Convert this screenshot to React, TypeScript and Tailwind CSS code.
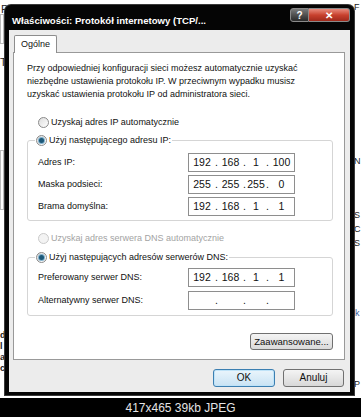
import { Fragment } from 'react';

function Radio({ checked, disabled }: { checked?: boolean; disabled?: boolean }) {
  return (
    <span
      className={`flex h-[11px] w-[11px] shrink-0 items-center justify-center rounded-full border ${
        disabled ? 'border-[#cacaca] bg-[#f3f3f3]' : 'border-[#8a8a8a] bg-gradient-to-br from-[#dcdcdc] to-white'
      }`}
    >
      {checked && <span className="h-[5px] w-[5px] rounded-full bg-[#1d5878] ring-1 ring-[#7fb0cc]" />}
    </span>
  );
}

function RadioLabel({ label, checked, disabled }: { label: string; checked?: boolean; disabled?: boolean }) {
  return (
    <div className={`flex h-[13px] items-center gap-[2px] ${disabled ? 'text-[#a3a3a3]' : 'text-[#111]'}`}>
      <Radio checked={checked} disabled={disabled} />
      <span className="leading-[13px]">{label}</span>
    </div>
  );
}

const fieldWidths = ['w-[26px]', 'w-[25px]', 'w-[20px]', 'w-[25px]'];

function IpBox({ parts }: { parts: string[] }) {
  return (
    <div className="flex h-[19px] w-[107px] items-center border border-[#8e8e8e] bg-white text-[10.5px]">
      {parts.map((p, i) => (
        <Fragment key={i}>
          {i > 0 && <span className="w-[3px] text-center">.</span>}
          <span className={`${fieldWidths[i]} text-center`}>{p}</span>
        </Fragment>
      ))}
    </div>
  );
}

function Row({ label, parts }: { label: string; parts: string[] }) {
  return (
    <div className="flex items-center">
      <span className="w-[150px]">{label}</span>
      <IpBox parts={parts} />
    </div>
  );
}

export default function App() {
  return (
    <div className="relative flex h-[417px] w-[361px] flex-col overflow-hidden bg-white font-['Liberation_Sans',Arial,sans-serif] text-[9px] text-[#111]">
      {/* page behind the dialog */}
      <span className="absolute left-[1px] top-[1px] text-[11px] text-[#222]">P</span>
      <span className="absolute left-[0px] top-[54px] text-[11px] text-[#222]">T</span>
      <span className="absolute left-[0px] top-[14px] h-[30px] w-[4px] border border-[#bbb]" />
      <span className="absolute left-[0px] top-[150px] h-[60px] w-[4px] border border-[#bbb]" />
      <span className="absolute left-[0px] top-[330px] text-[9px] font-bold leading-[11px] text-[#222]">d<br />l<br />a<br />c</span>
      <span className="absolute left-[354px] top-[1px] text-[9px] text-[#222]">F</span>
      <span className="absolute left-[354px] top-[155px] text-[9px] text-[#222]">N</span>
      <span className="absolute left-[354px] top-[209px] text-[9px] text-[#222]">S</span>
      <span className="absolute left-[354px] top-[223px] text-[9px] text-[#222]">C</span>
      <span className="absolute left-[354px] top-[237px] text-[9px] text-[#222]">S</span>
      <span className="absolute left-[355px] top-[307px] text-[9px] text-[#3a5a9a]">k</span>
      <span className="absolute left-[354px] top-[378px] text-[9px] text-[#222]">P</span>

      <div className="relative z-10 h-[398px] shrink-0 pl-[5px] pt-[5px]">
        {/* dialog */}
        <div className="flex h-[390px] w-[349px] flex-col rounded-t-[6px] bg-[#050505] px-[4px] pb-[3px] shadow-[0_0_0_1px_#3a3a3a]">
          {/* title bar */}
          <div className="flex h-[25px] shrink-0 items-start">
            <span className="flex-1 pl-[3px] pt-[10px] text-[9.6px] font-bold leading-[12px] text-white">
              Właściwości: Protokół internetowy (TCP/...
            </span>
            <div className="mt-[3px] flex h-[14px]">
              <div className="flex w-[19px] items-center justify-center rounded-l-[3px] border border-[#8a8a8a] bg-gradient-to-b from-[#7a7a7a] to-[#2a2a2a] text-[10px] font-bold text-white">
                ?
              </div>
              <div className="flex w-[41px] items-center justify-center rounded-r-[3px] border border-l-0 border-[#8a8a8a] bg-gradient-to-b from-[#e88a7c] via-[#c8412e] to-[#a0291b] text-[10px] font-bold text-white">
                ✕
              </div>
            </div>
          </div>

          {/* body */}
          <div className="flex flex-1 flex-col bg-[#ececec] px-[4px] pt-[5px]">
            <div className="relative z-10 -mb-px ml-[1px] flex h-[18px] w-[43px] items-center rounded-t-[2px] border border-b-0 border-[#8d8d8d] bg-white pl-[6px]">
              Ogólne
            </div>
            <div className="mr-[1px] flex h-[308px] flex-col border border-[#999] bg-white pl-[13px] pr-[11px]">
              <p className="mt-[9px] whitespace-nowrap leading-[13px]">
                Przy odpowiedniej konfiguracji sieci możesz automatycznie uzyskać
                <br />
                niezbędne ustawienia protokołu IP. W przeciwnym wypadku musisz
                <br />
                uzyskać ustawienia protokołu IP od administratora sieci.
              </p>

              <div className="ml-[11px] mt-[15px]">
                <RadioLabel label="Uzyskaj adres IP automatycznie" />
              </div>

              <fieldset className="mt-[5px] rounded-[3px] border border-[#d5d5d5] px-[10px] pb-[4px] pt-[6px]">
                <legend className="-ml-[3px] bg-white px-[1px]">
                  <RadioLabel label="Użyj następującego adresu IP:" checked />
                </legend>
                <div className="flex flex-col gap-[3px]">
                  <Row label="Adres IP:" parts={['192', '168', '1', '100']} />
                  <Row label="Maska podsieci:" parts={['255', '255', '255', '0']} />
                  <Row label="Brama domyślna:" parts={['192', '168', '1', '1']} />
                </div>
              </fieldset>

              <div className="ml-[11px] mt-[11px]">
                <RadioLabel label="Uzyskaj adres serwera DNS automatycznie" disabled />
              </div>

              <fieldset className="mt-[6px] rounded-[3px] border border-[#d5d5d5] px-[10px] pb-[5px] pt-[4px]">
                <legend className="-ml-[3px] bg-white px-[1px]">
                  <RadioLabel label="Użyj następujących adresów serwerów DNS:" checked />
                </legend>
                <div className="flex flex-col gap-[4px]">
                  <Row label="Preferowany serwer DNS:" parts={['192', '168', '1', '1']} />
                  <Row label="Alternatywny serwer DNS:" parts={['', '', '', '']} />
                </div>
              </fieldset>

              <div className="mt-[17px] flex justify-end">
                <button className="h-[17px] w-[83px] rounded-[3px] border border-[#707070] bg-gradient-to-b from-[#f4f4f4] to-[#dadada] text-[9.5px] leading-none">
                  Zaawansowane...
                </button>
              </div>
            </div>

            <div className="mt-[9px] flex justify-end gap-[8px] pr-[2px]">
              <button className="h-[18px] w-[62px] rounded-[3px] border border-[#3c7fb1] bg-gradient-to-b from-[#eaf5fc] to-[#c9e3f4] text-[10px] leading-none shadow-[inset_0_0_0_1px_#bfe3f8]">
                OK
              </button>
              <button className="h-[18px] w-[61px] rounded-[3px] border border-[#707070] bg-gradient-to-b from-[#f4f4f4] to-[#d8d8d8] text-[10px] leading-none">
                Anuluj
              </button>
            </div>
          </div>
        </div>
      </div>

      <div className="relative z-10 flex flex-1 items-center justify-center bg-black text-[12px] text-[#e4e4e4]">
        417x465 39kb JPEG
      </div>
    </div>
  );
}
